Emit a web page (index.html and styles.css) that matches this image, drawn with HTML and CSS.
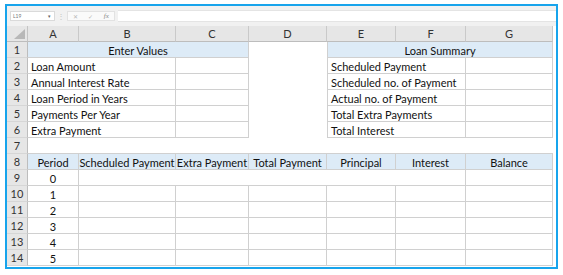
FILE: index.html
```html
<!DOCTYPE html>
<html lang="en">
  <head>
    <meta charset="UTF-8" />
    <title>Loan Amortization Sheet</title>
    <link rel="stylesheet" href="styles.css">
  </head>
  <body>
    <div class="frame">
      <div class="formula-bar">
        <div class="name-box"><span>L19</span><span class="drop">&#9662;</span></div>
        <div class="grip">&#8942;</div>
        <div class="fx-box">
          <span class="fx-btn">&#10005;</span>
          <span class="fx-btn">&#10003;</span>
          <span class="fx-btn fx">fx</span>
        </div>
        <div class="formula-input"></div>
      </div>
      <div class="sheet">
        <!-- column headers -->
        <div class="corner"><span class="tri"></span></div>
        <div class="col-head">A</div>
        <div class="col-head">B</div>
        <div class="col-head">C</div>
        <div class="col-head">D</div>
        <div class="col-head">E</div>
        <div class="col-head">F</div>
        <div class="col-head">G</div>

        <!-- row 1 -->
        <div class="row-head">1</div>
        <div class="cell title span3 br bb">Enter Values</div>
        <div class="cell"></div>
        <div class="cell title span3 bl br bb">Loan Summary</div>

        <!-- rows 2-6 -->
        <div class="row-head">2</div>
        <div class="cell label span2 br bb">Loan Amount</div>
        <div class="cell br bb"></div>
        <div class="cell"></div>
        <div class="cell label span2 bl br bb">Scheduled Payment</div>
        <div class="cell br bb"></div>

        <div class="row-head">3</div>
        <div class="cell label span2 br bb">Annual Interest Rate</div>
        <div class="cell br bb"></div>
        <div class="cell"></div>
        <div class="cell label span2 bl br bb">Scheduled no. of Payment</div>
        <div class="cell br bb"></div>

        <div class="row-head">4</div>
        <div class="cell label span2 br bb">Loan Period in Years</div>
        <div class="cell br bb"></div>
        <div class="cell"></div>
        <div class="cell label span2 bl br bb">Actual no. of Payment</div>
        <div class="cell br bb"></div>

        <div class="row-head">5</div>
        <div class="cell label span2 br bb">Payments Per Year</div>
        <div class="cell br bb"></div>
        <div class="cell"></div>
        <div class="cell label span2 bl br bb">Total Extra Payments</div>
        <div class="cell br bb"></div>

        <div class="row-head">6</div>
        <div class="cell label span2 br bb">Extra Payment</div>
        <div class="cell br bb"></div>
        <div class="cell"></div>
        <div class="cell label span2 bl br bb">Total Interest</div>
        <div class="cell br bb"></div>

        <!-- row 7 -->
        <div class="row-head">7</div>
        <div class="cell span7 bb"></div>

        <!-- row 8 -->
        <div class="row-head">8</div>
        <div class="cell title br bb">Period</div>
        <div class="cell title br bb">Scheduled Payment</div>
        <div class="cell title br bb">Extra Payment</div>
        <div class="cell title br bb">Total Payment</div>
        <div class="cell title br bb">Principal</div>
        <div class="cell title br bb">Interest</div>
        <div class="cell title br bb">Balance</div>

        <!-- row 9 -->
        <div class="row-head">9</div>
        <div class="cell num br bb">0</div>
        <div class="cell span5 br bb"></div>
        <div class="cell br bb"></div>

        <!-- rows 10-14 -->
        <div class="row-head">10</div>
        <div class="cell num br bb">1</div>
        <div class="cell br bb"></div><div class="cell br bb"></div><div class="cell br bb"></div>
        <div class="cell br bb"></div><div class="cell br bb"></div><div class="cell br bb"></div>

        <div class="row-head">11</div>
        <div class="cell num br bb">2</div>
        <div class="cell br bb"></div><div class="cell br bb"></div><div class="cell br bb"></div>
        <div class="cell br bb"></div><div class="cell br bb"></div><div class="cell br bb"></div>

        <div class="row-head">12</div>
        <div class="cell num br bb">3</div>
        <div class="cell br bb"></div><div class="cell br bb"></div><div class="cell br bb"></div>
        <div class="cell br bb"></div><div class="cell br bb"></div><div class="cell br bb"></div>

        <div class="row-head">13</div>
        <div class="cell num br bb">4</div>
        <div class="cell br bb"></div><div class="cell br bb"></div><div class="cell br bb"></div>
        <div class="cell br bb"></div><div class="cell br bb"></div><div class="cell br bb"></div>

        <div class="row-head">14</div>
        <div class="cell num br bb">5</div>
        <div class="cell br bb"></div><div class="cell br bb"></div><div class="cell br bb"></div>
        <div class="cell br bb"></div><div class="cell br bb"></div><div class="cell br bb"></div>
      </div>
    </div>
  </body>
</html>
```

FILE: styles.css
```css
body {
  margin: 0;
  padding: 0;
  background: white;
  font-family: "Lato", "Liberation Sans", sans-serif;
  color: #111;
}

.frame {
  margin: 4px 0 0 5px;
  width: 549px;
  height: 261px;
  border: 2px solid #17a4ec;
  background: white;
  overflow: hidden;
}

/* formula bar */
.formula-bar {
  height: 20px;
  display: flex;
  align-items: center;
  padding-left: 3px;
  background: #f1f1f1;
}

.name-box {
  width: 45px;
  height: 10px;
  box-sizing: border-box;
  background: white;
  border: 1px solid #dadada;
  display: flex;
  align-items: center;
  justify-content: space-between;
  padding: 0 3px 0 2px;
  font-size: 5px;
  color: #777;
}

.name-box .drop {
  font-size: 5px;
  color: #666;
}

.grip {
  width: 12px;
  text-align: center;
  font-size: 8px;
  color: #c4c4c4;
}

.fx-box {
  width: 48px;
  height: 10px;
  box-sizing: border-box;
  background: #fafafa;
  border: 1px solid #e2e2e2;
  display: flex;
  align-items: center;
  justify-content: space-around;
  margin-right: 3px;
}

.fx-btn {
  font-size: 6px;
  color: #b8b8b8;
}

.fx-btn.fx {
  font-family: "Liberation Serif", serif;
  font-style: italic;
  color: #888;
  font-size: 7px;
}

.formula-input {
  flex: 1;
  height: 10px;
  background: white;
  border-top: 1px solid #e4e4e4;
  border-bottom: 1px solid #e4e4e4;
}

/* sheet */
.sheet {
  display: grid;
  grid-template-columns: 21px 51px 97px 73px 78px 69px 70px 87px;
  grid-auto-rows: 16px;
  width: 546px;
  font-size: 11px;
}

.corner,
.col-head,
.row-head {
  background: #e6e6e6;
  box-sizing: border-box;
  color: #333;
  display: flex;
  align-items: center;
  justify-content: center;
}

.corner {
  border-right: 1px solid #c4c4c4;
  border-bottom: 1px solid #bdbdbd;
  position: relative;
}

.corner .tri {
  position: absolute;
  right: 2px;
  bottom: 2px;
  width: 0;
  height: 0;
  border-left: 11px solid transparent;
  border-bottom: 10px solid #b8b8b8;
}

.col-head {
  border-right: 1px solid #c9c9c9;
  border-bottom: 1px solid #bdbdbd;
  font-size: 11px;
}

.row-head {
  border-right: 1px solid #bdbdbd;
  border-bottom: 1px solid #d6d6d6;
  font-size: 11px;
}

.cell {
  box-sizing: border-box;
  display: flex;
  align-items: center;
  white-space: nowrap;
  overflow: hidden;
  background: white;
  padding-top: 1px;
}

.title {
  background: #ddebf7;
  justify-content: center;
}

.label {
  padding-left: 3px;
}

.num {
  justify-content: center;
}

.span2 { grid-column: span 2; }
.span3 { grid-column: span 3; }
.span5 { grid-column: span 5; }
.span7 { grid-column: span 7; }

.br { border-right: 1px solid #d0d0d0; }
.bb { border-bottom: 1px solid #d0d0d0; }
.bl { border-left: 1px solid #d0d0d0; }
```
